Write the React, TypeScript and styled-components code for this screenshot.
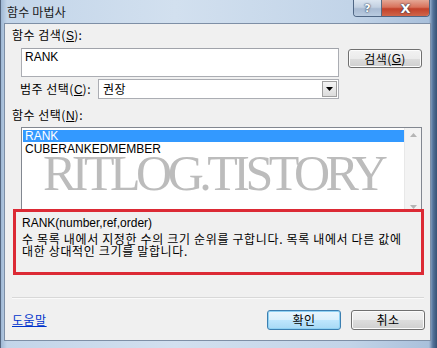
import React from "react";
import styled, { createGlobalStyle } from "styled-components";

const Global = createGlobalStyle`
  html, body { margin: 0; padding: 0; background: #ffffff; }
  body {
    font-family: "Liberation Sans", "Noto Sans CJK KR", sans-serif;
    font-size: 12px;
    color: #000;
  }
  * { box-sizing: border-box; }
`;

const Window = styled.div`
  width: 437px;
  height: 348px;
  display: flex;
  flex-direction: column;
  background: linear-gradient(to right, #9fb8d4 0px, #c3d5e9 6px, #d2e0ef 40%, #c2d4e8 80%, #a9c0db 428px, #54739a 432px, #2f4a6c 437px);
  border-left: 1px solid #54667f;
`;

const TitleBar = styled.div`
  height: 23px;
  display: flex;
  align-items: flex-start;
  padding-left: 6px;
`;

const TitleText = styled.div`
  margin-top: 5px;
  font-family: "Noto Sans CJK KR", sans-serif;
  font-size: 12px;
  line-height: 14px;
  color: #1a1a1a;
  letter-spacing: 0.2px;
`;

const Controls = styled.div`
  margin-left: auto;
  margin-right: 7px;
  display: flex;
  height: 17px;
  border: 1px solid #4f6684;
  border-top: none;
  border-radius: 0 0 4px 4px;
  overflow: hidden;
`;

const CtrlBtn = styled.div<{ $w: number; $red?: boolean }>`
  width: ${(p) => p.$w}px;
  height: 16px;
  display: flex;
  align-items: center;
  justify-content: center;
  color: #fff;
  font-family: "DejaVu Sans", sans-serif;
  font-weight: bold;
  font-size: ${(p) => (p.$red ? 13 : 11)}px;
  text-shadow: 0 0 2px #2a3a55, 0 0 1px #2a3a55;
  background: ${(p) =>
    p.$red
      ? "linear-gradient(#e4a795 0%, #d8725b 45%, #c2412a 55%, #d0664a 100%)"
      : "linear-gradient(#dbe5f0 0%, #c2d0e1 45%, #a8bad2 55%, #b9cbe0 100%)"};
  border-left: ${(p) => (p.$red ? "1px solid #5a6a80" : "none")};
`;

const Client = styled.div`
  margin-left: 3px;
  width: 427px;
  height: 318px;
  background: #f0f0f0;
  border: 1px solid #7e8fa6;
  display: flex;
  flex-direction: column;
  padding-top: 4px;
`;

const Label = styled.div<{ $left: number; $top?: number }>`
  margin-left: ${(p) => p.$left}px;
  margin-top: ${(p) => p.$top ?? 0}px;
  line-height: 14px;
  height: 14px;
  white-space: nowrap;
  font-family: "Noto Sans CJK KR", sans-serif;
  font-size: 12px;
  letter-spacing: 0.5px;
`;

const U = styled.span`
  text-decoration: underline;
  font-family: "Liberation Sans", sans-serif;
  letter-spacing: 0;
`;

const SearchRow = styled.div`
  margin-top: 6px;
  margin-left: 16px;
  display: flex;
  align-items: flex-start;
`;

const TextBox = styled.div`
  width: 318px;
  height: 29px;
  background: #fff;
  border: 1px solid #abadb3;
  border-top-color: #a0a3aa;
  padding: 2px 3px;
  line-height: 13px;
`;

const Button = styled.div<{ $focus?: boolean }>`
  width: 74px;
  height: 20px;
  border: 1px solid ${(p) => (p.$focus ? "#3c7fb1" : "#707070")};
  border-radius: 3px;
  display: flex;
  align-items: center;
  justify-content: center;
  font-family: "Noto Sans CJK KR", sans-serif;
  font-size: 12px;
  line-height: 14px;
  letter-spacing: 0.5px;
  box-shadow: inset 0 0 0 1px ${(p) => (p.$focus ? "#8fd1f3" : "#fcfcfc")};
  background: ${(p) =>
    p.$focus
      ? "linear-gradient(#eaf6fd 0%, #d9f0fc 50%, #bee6fd 51%, #a7d9f5 100%)"
      : "linear-gradient(#f2f2f2 0%, #ebebeb 50%, #dddddd 51%, #cfcfcf 100%)"};
`;

const SearchButton = styled(Button)`
  margin-left: 9px;
  margin-top: 1px;
  height: 19px;
`;

const CategoryRow = styled.div`
  margin-top: 2px;
  margin-left: 15px;
  display: flex;
  align-items: center;
  height: 20px;
`;

const CatLabel = styled.div`
  width: 78px;
  font-family: "Noto Sans CJK KR", sans-serif;
  line-height: 14px;
  letter-spacing: 0.5px;
  white-space: nowrap;
`;

const Select = styled.div`
  width: 241px;
  height: 20px;
  background: #fff;
  border: 1px solid #abadb3;
  display: flex;
  align-items: center;
  padding-left: 4px;
  padding-right: 1px;
  font-family: "Noto Sans CJK KR", sans-serif;
  line-height: 14px;
  letter-spacing: 0.5px;
`;

const DropBtn = styled.div`
  margin-left: auto;
  width: 15px;
  height: 16px;
  border: 1px solid #a0a0a0;
  background: linear-gradient(#f4f4f4, #dcdcdc);
  display: flex;
  align-items: center;
  justify-content: center;
`;

const ListBox = styled.div`
  position: relative;
  margin-top: 5px;
  margin-left: 16px;
  width: 401px;
  height: 88px;
  background: #fff;
  border: 1px solid #828790;
  display: flex;
  overflow: hidden;
`;

const Rows = styled.div`
  flex: 1;
  padding: 2px 0 0 1px;
  display: flex;
  flex-direction: column;
`;

const Row = styled.div<{ $sel?: boolean }>`
  height: 12px;
  line-height: 12px;
  padding-left: 2px;
  margin-bottom: 1px;
  background: ${(p) => (p.$sel ? "#3399ff" : "transparent")};
  color: ${(p) => (p.$sel ? "#fff" : "#000")};
`;

const ScrollBar = styled.div`
  width: 17px;
  background: #f3f3f3;
  border-left: 1px solid #e8e8e8;
  display: flex;
  flex-direction: column;
  justify-content: space-between;
  align-items: center;
  padding: 5px 0 5px;
`;

const Watermark = styled.div`
  position: absolute;
  left: 21px;
  top: 20px;
  font-family: "Liberation Serif", serif;
  font-size: 50px;
  line-height: 50px;
  letter-spacing: -4.5px;
  color: #bcbcbc;
  white-space: nowrap;
  pointer-events: none;
`;

const Description = styled.div`
  position: relative;
  margin-top: -6px;
  margin-left: 8px;
  width: 411px;
  height: 66px;
  border: 3px solid #dc2a35;
  background: #f0f0f0;
  padding: 5px 0 0 6px;
`;

const Signature = styled.div`
  line-height: 12px;
  height: 12px;
  white-space: nowrap;
`;

const DescText = styled.div`
  margin-top: 4px;
  font-family: "Noto Sans CJK KR", sans-serif;
  line-height: 12px;
  white-space: nowrap;
  letter-spacing: 0.65px;
`;

const Separator = styled.div`
  margin-top: 22px;
  margin-left: 7px;
  width: 412px;
  height: 1px;
  background: #d8d8d8;
  box-shadow: 0 1px 0 #fafafa;
`;

const Footer = styled.div`
  margin-top: 12px;
  margin-left: 7px;
  display: flex;
  align-items: center;
  height: 20px;
`;

const HelpLink = styled.span`
  color: #0033cc;
  text-decoration: underline;
  font-family: "Noto Sans CJK KR", sans-serif;
  line-height: 14px;
  letter-spacing: 0.5px;
`;

const FooterButtons = styled.div`
  margin-left: auto;
  margin-right: 5px;
  display: flex;
  gap: 10px;
`;

const Arrow = ({ up, color }: { up?: boolean; color: string }) => (
  <svg width="7" height="4" viewBox="0 0 7 4">
    <path d={up ? "M0 4 L3.5 0 L7 4 Z" : "M0 0 L3.5 4 L7 0 Z"} fill={color} />
  </svg>
);

export default function App() {
  return (
    <>
      <Global />
      <Window>
        <TitleBar>
          <TitleText>함수 마법사</TitleText>
          <Controls>
            <CtrlBtn $w={27}>?</CtrlBtn>
            <CtrlBtn $w={48} $red>
              X
            </CtrlBtn>
          </Controls>
        </TitleBar>
        <Client>
          <Label $left={7}>
            함수 검색(<U>S</U>):
          </Label>
          <SearchRow>
            <TextBox>RANK</TextBox>
            <SearchButton>
              검색(<U>G</U>)
            </SearchButton>
          </SearchRow>
          <CategoryRow>
            <CatLabel>
              범주 선택(<U>C</U>):
            </CatLabel>
            <Select>
              권장
              <DropBtn>
                <Arrow color="#000" />
              </DropBtn>
            </Select>
          </CategoryRow>
          <Label $left={7} $top={9}>
            함수 선택(<U>N</U>):
          </Label>
          <ListBox>
            <Rows>
              <Row $sel>RANK</Row>
              <Row>CUBERANKEDMEMBER</Row>
            </Rows>
            <ScrollBar>
              <Arrow up color="#b5b5b5" />
              <Arrow color="#b5b5b5" />
            </ScrollBar>
            <Watermark>RITLOG.TISTORY</Watermark>
          </ListBox>
          <Description>
            <Signature>RANK(number,ref,order)</Signature>
            <DescText>
              수 목록 내에서 지정한 수의 크기 순위를 구합니다. 목록 내에서 다른 값에
              <br />
              대한 상대적인 크기를 말합니다.
            </DescText>
          </Description>
          <Separator />
          <Footer>
            <HelpLink>도움말</HelpLink>
            <FooterButtons>
              <Button $focus>확인</Button>
              <Button>취소</Button>
            </FooterButtons>
          </Footer>
        </Client>
      </Window>
    </>
  );
}
